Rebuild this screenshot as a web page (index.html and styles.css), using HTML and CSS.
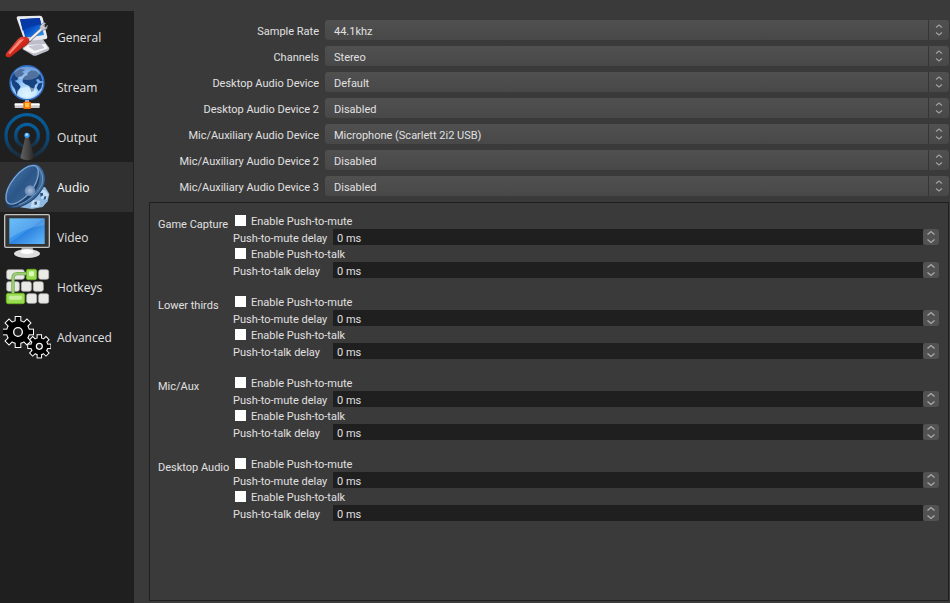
FILE: index.html
```
<!DOCTYPE html>
<html lang="en">
<head>
    <meta charset="UTF-8">
    <meta name="viewport" content="width=device-width, initial-scale=1.0">
    <title>Settings</title>
    <link rel="stylesheet" href="styles.css">
</head>
<body>
    <!-- shared arrow shapes -->
    <svg class="defs" width="0" height="0">
      <symbol id="updown" viewBox="0 0 8 12">
        <path d="M1 3.500L4 1L7 3.500M1 8.500L4 11L7 8.500" fill="none" stroke="#a0a0a0" stroke-width="1.200"/>
      </symbol>
      <symbol id="up" viewBox="0 0 10 6">
        <path d="M1.500 4.500L5 1.500L8.500 4.500" fill="none" stroke="#aaa" stroke-width="1.300"/>
      </symbol>
      <symbol id="down" viewBox="0 0 10 6">
        <path d="M1.500 1.500L5 4.500L8.500 1.500" fill="none" stroke="#aaa" stroke-width="1.300"/>
      </symbol>
    </svg>

    <div class="settings">
      <nav class="sidebar">
        <a class="item" href="#general">
          <svg class="icon" viewBox="9 39 144 144">
            <defs>
              <linearGradient id="screen" x1="0" y1="0" x2="1" y2="1">
                <stop offset="0" stop-color="#0a2f9c"/><stop offset=".5" stop-color="#0650c8"/><stop offset="1" stop-color="#2fa0f5"/>
              </linearGradient>
              <linearGradient id="handle" x1="0" y1="0" x2="1" y2="1">
                <stop offset="0" stop-color="#ff8a78"/><stop offset=".5" stop-color="#d42a1c"/><stop offset="1" stop-color="#8c0d08"/>
              </linearGradient>
            </defs>
            <path d="M83 130L104 116L126 114L148 144Q149 150 143 153L108 167Q102 169 96 164L68 148Q66 143 72 140Z" fill="#bcbdc8"/>
            <path d="M70 147L84 135L136 132L144 145L108 159Q102 161 96 158Z" fill="#f6f6f8"/>
            <path d="M84 139L124 133L134 144L104 152Z" fill="#c4c5d0"/>
            <path d="M50 55Q49 49 55 49L120 47Q126 47 128 53L142 111Q143 117 136 118L74 124Z" fill="#e9eaf0"/>
            <path d="M60 58L119 54L132 105L76 113Z" fill="url(#screen)"/>
            <path d="M60 58L119 54L124 73Q90 78 68 92Z" fill="#0739a6"/>
            <path d="M84 119L120 86L120 78L131 67L137 70L131 77L136 82L143 75L140 87L127 91L90 125Z" fill="#c7c9d0" stroke="#6f7280" stroke-width="2"/>
            <path d="M84 120L122 86L125 89L88 123Z" fill="#f4f4f6"/>
            <path d="M20 158L54 117Q66 107 80 111Q91 117 87 127Q84 135 70 141L31 171Q22 174 17 167Q16 162 20 158Z" fill="url(#handle)"/>
            <path d="M25 159L58 121Q65 116 72 118L30 162Z" fill="#ff9e90" opacity=".8"/>
          </svg>
          <span>General</span>
        </a>
        <a class="item" href="#stream">
          <svg class="icon" viewBox="9 189 144 144">
            <defs>
              <radialGradient id="globe" cx=".5" cy=".85" r=".85">
                <stop offset="0" stop-color="#d8f2ff"/><stop offset=".5" stop-color="#8cc0f5"/><stop offset="1" stop-color="#3473c9"/>
              </radialGradient>
            </defs>
            <rect x="75" y="296" width="12" height="14" fill="#b9b9b9"/>
            <rect x="44" y="309" width="75" height="15" rx="2" fill="#c9c9c9"/>
            <rect x="44" y="312" width="75" height="4" fill="#fff"/>
            <rect x="70" y="305" width="23" height="22" rx="3" fill="#f26a0c"/>
            <rect x="75" y="309" width="13" height="13" fill="#ffc83c"/>
            <circle cx="81" cy="248" r="51" fill="url(#globe)" stroke="#2e68c0" stroke-width="4"/>
            <path d="M33 238Q40 214 62 206L76 209L66 216L73 220L65 229L56 231L52 240L44 242L56 251L62 260L55 274L50 285L45 268L37 256Z" fill="#17427f"/>
            <path d="M68 236L75 228L82 226L83 218L94 211L108 213L122 226L128 242L121 244L115 236L108 239L113 248L105 255L101 272L94 276L88 258L76 253L68 246Z" fill="#17427f"/>
            <path d="M116 250L127 248L124 264L116 273L110 263Z" fill="#17427f"/>
            <ellipse cx="81" cy="220" rx="38" ry="20" fill="#fff" opacity=".25"/>
            <ellipse cx="81" cy="277" rx="30" ry="16" fill="#e8faff" opacity=".5"/>
          </svg>
          <span>Stream</span>
        </a>
        <a class="item" href="#output">
          <svg class="icon" viewBox="9 9 144 144">
            <defs>
              <linearGradient id="wave" x1="0" y1="0" x2="0" y2="1">
                <stop offset="0" stop-color="#065f9d"/><stop offset=".6" stop-color="#08497a"/><stop offset="1" stop-color="#1d2b38"/>
              </linearGradient>
              <linearGradient id="mast" x1="0" y1="0" x2="1" y2="0">
                <stop offset="0" stop-color="#626262"/><stop offset=".5" stop-color="#464646"/><stop offset="1" stop-color="#262626"/>
              </linearGradient>
            </defs>
            <circle cx="81" cy="77" r="63" fill="none" stroke="url(#wave)" stroke-width="10"/>
            <circle cx="81" cy="77" r="34" fill="none" stroke="url(#wave)" stroke-width="10"/>
            <path d="M76 80H86L103 144Q82 158 61 144Z" fill="url(#mast)"/>
            <circle cx="81" cy="76" r="8" fill="#2f9bef"/>
            <circle cx="80" cy="74" r="4" fill="#a5dcff"/>
          </svg>
          <span>Output</span>
        </a>
        <a class="item active" href="#audio">
          <svg class="icon" viewBox="9 9 144 144">
            <defs>
              <linearGradient id="cone" x1="0" y1="0" x2="1" y2="1">
                <stop offset="0" stop-color="#4f82b8"/><stop offset=".5" stop-color="#2c5588"/><stop offset="1" stop-color="#44709f"/>
              </linearGradient>
              <radialGradient id="cap">
                <stop offset="0" stop-color="#a7bdd9"/><stop offset="1" stop-color="#6486b2"/>
              </radialGradient>
            </defs>
            <path d="M118 78L136 82L148 102L143 124L128 141L96 147L60 142Z" fill="#8fb8e0"/>
            <path d="M122 86L137 92L146 104L140 120L124 116ZM96 120L120 122L118 140L92 143Z" fill="#c2dcf4"/>
            <path d="M120 100L128 98L130 106L122 110ZM132 110L139 108L137 118L131 119ZM103 127L110 124L111 133L104 135Z" fill="#2c527f"/>
            <path d="M15 118C12 80 56 14 102 11C132 14 145 57 131 81C112 121 62 151 30 143C19 140 16 130 15 118Z" fill="#213f66"/>
            <path d="M104 13C131 17 141 56 129 80C110 118 62 147 32 141C70 136 96 112 112 82C124 56 119 25 104 13Z" fill="#3d6796"/>
            <path d="M112 20C130 40 132 62 122 80C107 106 80 126 56 134" fill="none" stroke="#6f9cc9" stroke-width="3"/>
            <path d="M18 115C16 80 60 19 100 16C121 17 118 50 103 78C84 112 45 138 27 131C20 128 18 121 18 115Z" fill="url(#cone)" stroke="#7aa7d4" stroke-width="4"/>
            <circle cx="90" cy="92" r="16" fill="url(#cap)"/>
          </svg>
          <span>Audio</span>
        </a>
        <a class="item" href="#video">
          <svg class="icon" viewBox="9 9 144 144">
            <defs>
              <linearGradient id="tv" x1="0" y1="0" x2="1" y2="1">
                <stop offset="0" stop-color="#4eb2f5"/><stop offset=".48" stop-color="#3894eb"/><stop offset=".5" stop-color="#2c83e0"/><stop offset="1" stop-color="#64b9f8"/>
              </linearGradient>
            </defs>
            <path d="M68 105H96L101 125H62Z" fill="#aaa"/>
            <ellipse cx="81" cy="131" rx="39" ry="13" fill="#dedede"/>
            <ellipse cx="81" cy="125" rx="19" ry="7" fill="#fff"/>
            <rect x="14" y="14" width="134" height="98" rx="4" fill="#343434" stroke="#c3c3bf" stroke-width="4"/>
            <rect x="28" y="25" width="106" height="77" fill="url(#tv)"/>
            <path d="M28 25H134V45Q72 54 28 86Z" fill="#fff" opacity=".16"/>
          </svg>
          <span>Video</span>
        </a>
        <a class="item" href="#hotkeys">
          <svg class="icon" viewBox="9 159 144 144">
            <g fill="#e9e9e6" stroke="#b5b5b1" stroke-width="2">
              <rect x="20" y="179" width="53" height="29" rx="6"/>
              <rect x="116" y="179" width="30" height="29" rx="6"/>
              <rect x="20" y="215" width="38" height="29" rx="6"/>
              <rect x="64" y="215" width="30" height="29" rx="6"/>
              <rect x="100" y="215" width="30" height="29" rx="6"/>
              <rect x="80" y="251" width="30" height="29" rx="6"/>
              <rect x="116" y="251" width="30" height="29" rx="6"/>
            </g>
            <g fill="#9bdc52" stroke="#67b51d" stroke-width="3">
              <rect x="79" y="178" width="31" height="31" rx="6"/>
              <rect x="19" y="250" width="55" height="31" rx="6"/>
            </g>
            <rect x="87" y="184" width="15" height="15" rx="4" fill="#dcf8bc"/>
            <rect x="27" y="257" width="39" height="12" rx="4" fill="#c8f09a"/>
            <path d="M39 250V204Q39 191 52 191H79" fill="none" stroke="#6fae45" stroke-width="10"/>
            <path d="M39 250V204Q39 191 52 191H79" fill="none" stroke="#a4cf83" stroke-width="5"/>
          </svg>
          <span>Hotkeys</span>
        </a>
        <a class="item" href="#advanced">
          <svg class="icon" viewBox="9 309 144 144">
            <defs>
              <g id="teeth">
                <rect x="-7" y="-45" width="14" height="90"/>
                <rect x="-7" y="-45" width="14" height="90" transform="rotate(45)"/>
                <rect x="-7" y="-45" width="14" height="90" transform="rotate(90)"/>
                <rect x="-7" y="-45" width="14" height="90" transform="rotate(135)"/>
                <circle r="33"/>
              </g>
            </defs>
            <g transform="translate(54 366)">
              <use href="#teeth" fill="#fff" stroke="#fff" stroke-width="6"/>
              <use href="#teeth" fill="#000"/>
              <circle r="13" fill="#1e1e1e" stroke="#fff" stroke-width="4"/>
            </g>
            <g transform="translate(118 409) scale(.74)">
              <use href="#teeth" fill="#fff" stroke="#fff" stroke-width="8"/>
              <use href="#teeth" fill="#000"/>
              <circle r="12" fill="#1e1e1e" stroke="#fff" stroke-width="5"/>
            </g>
          </svg>
          <span>Advanced</span>
        </a>
      </nav>

      <main class="content">
        <div class="devices">
          <label for="rate">Sample Rate</label>
          <div class="combo">
            <select id="rate"><option>44.1khz</option><option>48khz</option></select>
            <svg class="combo-arrow"><use href="#updown"/></svg>
          </div>
          <label for="channels">Channels</label>
          <div class="combo">
            <select id="channels"><option>Stereo</option><option>Mono</option></select>
            <svg class="combo-arrow"><use href="#updown"/></svg>
          </div>
          <label for="desktop1">Desktop Audio Device</label>
          <div class="combo">
            <select id="desktop1"><option>Default</option><option>Disabled</option></select>
            <svg class="combo-arrow"><use href="#updown"/></svg>
          </div>
          <label for="desktop2">Desktop Audio Device 2</label>
          <div class="combo">
            <select id="desktop2"><option>Disabled</option><option>Default</option></select>
            <svg class="combo-arrow"><use href="#updown"/></svg>
          </div>
          <label for="mic1">Mic/Auxiliary Audio Device</label>
          <div class="combo">
            <select id="mic1"><option>Microphone (Scarlett 2i2 USB)</option><option>Disabled</option></select>
            <svg class="combo-arrow"><use href="#updown"/></svg>
          </div>
          <label for="mic2">Mic/Auxiliary Audio Device 2</label>
          <div class="combo">
            <select id="mic2"><option>Disabled</option><option>Default</option></select>
            <svg class="combo-arrow"><use href="#updown"/></svg>
          </div>
          <label for="mic3">Mic/Auxiliary Audio Device 3</label>
          <div class="combo">
            <select id="mic3"><option>Disabled</option><option>Default</option></select>
            <svg class="combo-arrow"><use href="#updown"/></svg>
          </div>
        </div>

        <div class="sources">
          <section class="source">
            <div class="name">Game Capture</div>
            <div class="options">
              <label class="check"><input type="checkbox">Enable Push-to-mute</label>
              <div class="delay">
                <label for="game-mute">Push-to-mute delay</label>
                <input id="game-mute" type="text" value="0 ms">
                <div class="spin">
                  <button aria-label="Increase"><svg><use href="#up"/></svg></button>
                  <button aria-label="Decrease"><svg><use href="#down"/></svg></button>
                </div>
              </div>
              <label class="check"><input type="checkbox">Enable Push-to-talk</label>
              <div class="delay">
                <label for="game-talk">Push-to-talk delay</label>
                <input id="game-talk" type="text" value="0 ms">
                <div class="spin">
                  <button aria-label="Increase"><svg><use href="#up"/></svg></button>
                  <button aria-label="Decrease"><svg><use href="#down"/></svg></button>
                </div>
              </div>
            </div>
          </section>
          <section class="source">
            <div class="name">Lower thirds</div>
            <div class="options">
              <label class="check"><input type="checkbox">Enable Push-to-mute</label>
              <div class="delay">
                <label for="lower-mute">Push-to-mute delay</label>
                <input id="lower-mute" type="text" value="0 ms">
                <div class="spin">
                  <button aria-label="Increase"><svg><use href="#up"/></svg></button>
                  <button aria-label="Decrease"><svg><use href="#down"/></svg></button>
                </div>
              </div>
              <label class="check"><input type="checkbox">Enable Push-to-talk</label>
              <div class="delay">
                <label for="lower-talk">Push-to-talk delay</label>
                <input id="lower-talk" type="text" value="0 ms">
                <div class="spin">
                  <button aria-label="Increase"><svg><use href="#up"/></svg></button>
                  <button aria-label="Decrease"><svg><use href="#down"/></svg></button>
                </div>
              </div>
            </div>
          </section>
          <section class="source">
            <div class="name">Mic/Aux</div>
            <div class="options">
              <label class="check"><input type="checkbox">Enable Push-to-mute</label>
              <div class="delay">
                <label for="mic-mute">Push-to-mute delay</label>
                <input id="mic-mute" type="text" value="0 ms">
                <div class="spin">
                  <button aria-label="Increase"><svg><use href="#up"/></svg></button>
                  <button aria-label="Decrease"><svg><use href="#down"/></svg></button>
                </div>
              </div>
              <label class="check"><input type="checkbox">Enable Push-to-talk</label>
              <div class="delay">
                <label for="mic-talk">Push-to-talk delay</label>
                <input id="mic-talk" type="text" value="0 ms">
                <div class="spin">
                  <button aria-label="Increase"><svg><use href="#up"/></svg></button>
                  <button aria-label="Decrease"><svg><use href="#down"/></svg></button>
                </div>
              </div>
            </div>
          </section>
          <section class="source">
            <div class="name">Desktop Audio</div>
            <div class="options">
              <label class="check"><input type="checkbox">Enable Push-to-mute</label>
              <div class="delay">
                <label for="desk-mute">Push-to-mute delay</label>
                <input id="desk-mute" type="text" value="0 ms">
                <div class="spin">
                  <button aria-label="Increase"><svg><use href="#up"/></svg></button>
                  <button aria-label="Decrease"><svg><use href="#down"/></svg></button>
                </div>
              </div>
              <label class="check"><input type="checkbox">Enable Push-to-talk</label>
              <div class="delay">
                <label for="desk-talk">Push-to-talk delay</label>
                <input id="desk-talk" type="text" value="0 ms">
                <div class="spin">
                  <button aria-label="Increase"><svg><use href="#up"/></svg></button>
                  <button aria-label="Decrease"><svg><use href="#down"/></svg></button>
                </div>
              </div>
            </div>
          </section>
        </div>
      </main>
    </div>
</body>
</html>
```
FILE: styles.css
```
* {
  box-sizing: border-box;
}

body {
  margin: 0;
  background-color: #3a3a3a;
  color: #e1e0e1;
  font-family: Roboto, "Liberation Sans", sans-serif;
  font-size: 11px;
}

input, select, button {
  margin: 0;
  padding: 0;
  border: none;
  color: inherit;
  font: inherit;
}

.defs {
  position: absolute;
}

.settings {
  display: flex;
  min-height: 100vh;
  padding-top: 11px;
}

/* sidebar */
.sidebar {
  flex: none;
  width: 134px;
  padding: 1px 1px 0 0;
  background-color: #1f1f1f;
}

.item {
  display: flex;
  align-items: center;
  gap: 6px;
  height: 50px;
  padding-left: 3px;
  color: #e1e0e1;
  font-family: "Open Sans", sans-serif;
  font-size: 12px;
  text-decoration: none;
}

.item.active {
  background-color: #303030;
  color: #fff;
}

.icon {
  flex: none;
  width: 48px;
  height: 48px;
}

/* main panel */
.content {
  flex: 1;
  display: flex;
  flex-direction: column;
  padding: 9px 1px 2px 15px;
}

.devices {
  display: grid;
  grid-template-columns: 170px 1fr;
  gap: 6px;
  margin-bottom: 6px;
  line-height: 20px;
}

.devices label {
  padding-top: 2px;
  height: 20px;
  text-align: right;
}

.combo {
  position: relative;
  height: 20px;
}

.combo select {
  width: 100%;
  height: 20px;
  padding: 2px 30px 0 9px;
  appearance: none;
  background-image: linear-gradient(#505050, #484848);
  border-radius: 3px;
}

.combo-arrow {
  position: absolute;
  top: 0;
  right: 0;
  width: 21px;
  height: 20px;
  padding: 4px 6px 4px 6px;
  border-left: 1px solid #353535;
  pointer-events: none;
}

.sources {
  flex: 1;
  padding: 9px 9px 0 8px;
  border: 1px solid #1f1f1f;
}

.source {
  display: grid;
  grid-template-columns: 75px 1fr;
  margin-bottom: 15px;
  line-height: 19px;
}

.name {
  padding-top: 3px;
}

.check {
  display: flex;
  gap: 5px;
  height: 17px;
  padding-left: 2px;
}

.check input {
  width: 11px;
  height: 11px;
  margin-top: 3px;
  appearance: none;
  background-color: #fff;
}

.delay {
  display: flex;
  height: 16px;
}

.delay label {
  width: 100px;
}

.delay input {
  flex: 1;
  min-width: 0;
  padding: 2px 4px 0;
  background-color: #1f1f1f;
}

.spin {
  display: flex;
  flex-direction: column;
  width: 16px;
  background-color: #525252;
  border-radius: 3px;
}

.spin button {
  display: flex;
  align-items: center;
  justify-content: center;
  height: 8px;
  background: none;
}

.spin svg {
  width: 10px;
  height: 6px;
}
```
